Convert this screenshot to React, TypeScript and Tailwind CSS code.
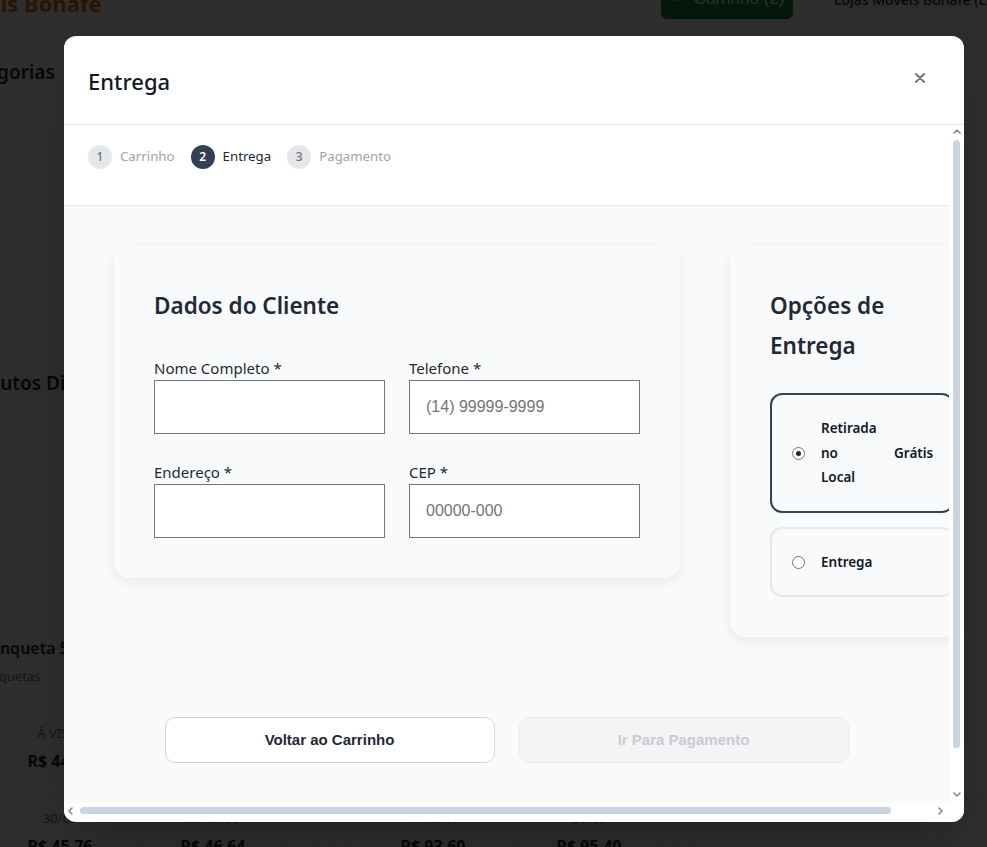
import React from "react";

function PriceCol({ w, label, price }: { w: string; label?: string; price?: string }) {
  return (
    <div className={`${w} shrink-0 border-l border-gray-200`}>
      {label && (
        <div className="flex flex-col items-center pt-[12px]">
          <div className="h-[18px] text-[13px] leading-[18px] text-gray-500">{label}</div>
          <div className="mt-[8px] h-[22px] text-[16px] font-bold leading-[22px]">{price}</div>
        </div>
      )}
    </div>
  );
}

function BackgroundPage() {
  return (
    <div className="flex h-[847px] w-[987px] flex-col overflow-hidden bg-white font-['Noto_Sans',sans-serif] text-[#1f2937]">
      <div className="-mt-[30px] flex h-[68px] shrink-0 items-center border-b border-gray-200">
        <div className="-ml-[59px] whitespace-nowrap text-[22px] font-bold text-[#d97706]">Móveis Bonafe</div>
        <div className="flex-1" />
        <div className="flex h-[49px] w-[132px] shrink-0 items-start justify-center gap-2 self-start rounded-b-md bg-[#15803d] pt-[16px] font-['Liberation_Sans',Arial,sans-serif] text-[17px] text-white">
          <span className="text-[13px] leading-[20px]">🛒</span>
          <span>Carrinho (2)</span>
        </div>
        <div className="ml-[28px] h-[50px] w-[166px] shrink-0 self-start overflow-hidden whitespace-nowrap rounded-bl-md bg-gray-100 pl-[13px] pt-[19px] text-[14px] font-medium">
          Lojas Móveis Bonafe (Loja 1)
        </div>
      </div>
      <div className="h-[758px] w-[142px] shrink-0 overflow-hidden">
        <div className="-ml-[45px] mt-[21px] h-[26px] whitespace-nowrap text-[19px] font-semibold leading-[26px]">Categorias</div>
        <div className="mt-[215px] border-t border-gray-200" />
        <div className="-ml-[43px] mt-[69px] h-[26px] whitespace-nowrap text-[19px] font-semibold leading-[26px]">Produtos Disponíveis</div>
        <div className="mt-[24px] border-t border-gray-200" />
        <div className="-ml-[20px] mt-[216px] h-[22px] whitespace-nowrap text-[16px] font-semibold leading-[22px]">Banqueta 50cm</div>
        <div className="-ml-[25px] mt-[8px] h-[18px] whitespace-nowrap text-[13px] leading-[18px] text-gray-500">Banquetas</div>
        <div className="mt-[26px] border-t border-gray-200" />
        <div className="mt-[12px] flex flex-col items-center pr-[22px]">
          <div className="h-[18px] text-[13px] leading-[18px] text-gray-500">À VISTA</div>
          <div className="mt-[8px] h-[22px] text-[16px] font-bold leading-[22px]">R$ 44,00</div>
        </div>
      </div>
      <div className="flex h-[90px] shrink-0 border-t border-gray-200">
        <div className="flex w-[142px] shrink-0 flex-col items-center pr-[22px] pt-[12px]">
          <div className="h-[18px] text-[13px] leading-[18px] text-gray-500">30/60</div>
          <div className="mt-[8px] h-[22px] text-[16px] font-bold leading-[22px]">R$ 45,76</div>
        </div>
        <PriceCol w="w-[141px]" label="30/60/90" price="R$ 46,64" />
        <PriceCol w="w-[32px]" />
        <PriceCol w="w-[19px]" />
        <PriceCol w="w-[15px]" />
        <PriceCol w="w-[167px]" label="À VISTA" price="R$ 93,60" />
        <PriceCol w="w-[145px]" label="30/60" price="R$ 95,40" />
        <PriceCol w="w-[16px]" />
        <div className="w-[15px] shrink-0 border-x border-gray-200" />
      </div>
    </div>
  );
}

function Step({ n, label, active }: { n: number; label: string; active?: boolean }) {
  return (
    <div className="flex items-center">
      <div
        className={
          active
            ? "flex h-6 w-6 items-center justify-center rounded-full bg-[#334155] text-[12px] font-semibold text-white"
            : "flex h-6 w-6 items-center justify-center rounded-full bg-[#e5e7eb] text-[12px] font-medium text-[#6b7280]"
        }
      >
        {n}
      </div>
      <span className={active ? "ml-2 text-[13.25px] text-[#1e293b]" : "ml-2 text-[13.25px] text-[#9ca3af]"}>{label}</span>
    </div>
  );
}

function Field({ label, placeholder }: { label: string; placeholder?: string }) {
  return (
    <div>
      <label className="block h-6 text-[15px] leading-6 text-[#1f2937]">{label}</label>
      <input
        placeholder={placeholder}
        className="block h-[54px] w-full border border-[#767676] bg-white px-4 font-['Liberation_Sans',Arial,sans-serif] text-[16px] text-[#111827] outline-none placeholder:text-[#757575]"
      />
    </div>
  );
}

function Radio({ checked }: { checked?: boolean }) {
  return (
    <span className="flex h-[13px] w-[13px] shrink-0 items-center justify-center rounded-full border border-[#767676] bg-white">
      {checked && <span className="h-[5px] w-[5px] rounded-full bg-[#1f2937]" />}
    </span>
  );
}

function Chevron({ dir }: { dir: "up" | "down" | "left" | "right" }) {
  const d =
    dir === "up"
      ? "M1 5L4 2L7 5"
      : dir === "down"
      ? "M1 2L4 5L7 2"
      : dir === "left"
      ? "M5 1L2 4L5 7"
      : "M2 1L5 4L2 7";
  const vertical = dir === "up" || dir === "down";
  return (
    <svg width={vertical ? 8 : 7} height={vertical ? 7 : 8} viewBox={vertical ? "0 0 8 7" : "0 0 7 8"} className="shrink-0">
      <path d={d} fill="none" stroke="#8b8b8b" strokeWidth="1.6" strokeLinecap="round" strokeLinejoin="round" />
    </svg>
  );
}

function Modal() {
  return (
    <div className="flex h-[786px] w-[900px] flex-col overflow-hidden rounded-xl bg-white pb-1 font-['Noto_Sans',sans-serif] shadow-2xl">
      <div className="flex h-[89px] shrink-0 items-center justify-between border-b border-[#e5e7eb] pl-6 pr-7">
        <h2 className="pt-[3px] text-[22px] font-medium text-[#111827]">Entrega</h2>
        <button className="-mt-[4px] flex h-8 w-8 items-center justify-center text-[#6b7280]">
          <svg width="10" height="10" viewBox="0 0 10 10">
            <path d="M1 1L9 9M9 1L1 9" stroke="currentColor" strokeWidth="1.8" strokeLinecap="round" />
          </svg>
        </button>
      </div>
      <div className="flex min-h-0 flex-1">
        <div className="min-w-0 flex-1 overflow-hidden">
          <div className="flex items-center gap-4 border-b border-[#e5e7eb] bg-white px-6 pb-[36px] pt-[20px]">
            <Step n={1} label="Carrinho" />
            <Step n={2} label="Entrega" active />
            <Step n={3} label="Pagamento" />
          </div>
          <div className="bg-[#fafafa] pb-[89px] pt-10">
            <div className="flex w-max items-start gap-[50px] pl-[50px] pr-[7px]">
              <div className="w-[566px] rounded-2xl bg-[#f8fafc] p-10 shadow-[0_4px_14px_rgba(0,0,0,0.07)]">
                <h3 className="mb-[30px] text-[22.5px] font-semibold leading-10 text-[#1f2937]">Dados do Cliente</h3>
                <div className="grid grid-cols-2 gap-x-6 gap-y-[26px]">
                  <Field label="Nome Completo *" />
                  <Field label="Telefone *" placeholder="(14) 99999-9999" />
                  <Field label="Endereço *" />
                  <Field label="CEP *" placeholder="00000-000" />
                </div>
              </div>
              <div className="w-[264px] shrink-0 rounded-2xl bg-[#f8fafc] p-10 shadow-[0_4px_14px_rgba(0,0,0,0.07)]">
                <h3 className="mb-[27px] text-[22.5px] font-semibold leading-10 text-[#1f2937]">Opções de Entrega</h3>
                <div className="flex flex-col gap-[14px]">
                  <div className="flex h-[120px] items-center rounded-xl border-2 border-[#334155] px-5">
                    <Radio checked />
                    <span className="ml-4 w-[52px] shrink-0 text-[13.5px] font-semibold leading-[24.5px] text-[#111827]">Retirada no Local</span>
                    <span className="ml-[21px] whitespace-nowrap text-[13.5px] font-semibold text-[#111827]">Grátis</span>
                  </div>
                  <div className="flex h-[70px] items-center rounded-xl border-2 border-[#e5e7eb] px-5">
                    <Radio />
                    <span className="ml-4 text-[13.5px] font-semibold leading-[24.5px] text-[#111827]">Entrega</span>
                  </div>
                </div>
              </div>
            </div>
            <div className="mt-20 flex justify-center gap-6">
              <button className="h-[46px] w-[330px] rounded-[10px] border border-[#d4d4d8] bg-white font-['Liberation_Sans',Arial,sans-serif] text-[15px] font-bold text-[#1f2937]">
                Voltar ao Carrinho
              </button>
              <button className="h-[46px] w-[330px] rounded-[10px] border border-[#ececef] bg-[#f4f4f6] font-['Liberation_Sans',Arial,sans-serif] text-[15px] font-bold text-[#c9cbd1]">
                Ir Para Pagamento
              </button>
            </div>
          </div>
        </div>
        <div className="flex w-[15px] shrink-0 flex-col items-center bg-white pb-[5px] pt-[3px]">
          <Chevron dir="up" />
          <div className="mt-[5px] h-[608px] w-[7px] rounded-full bg-[#cbd5e1]" />
          <div className="flex-1" />
          <Chevron dir="down" />
        </div>
      </div>
      <div className="flex h-[15px] shrink-0 items-center bg-white">
        <div className="flex flex-1 items-center pl-[3px] pr-[5px]">
          <Chevron dir="left" />
          <div className="ml-[6px] h-[7px] w-[811px] rounded-full bg-[#cbd5e1]" />
          <div className="flex-1" />
          <Chevron dir="right" />
        </div>
        <div className="w-[15px] shrink-0" />
      </div>
    </div>
  );
}

export default function App() {
  return (
    <div className="relative h-[847px] w-[987px] overflow-hidden">
      <BackgroundPage />
      <div className="absolute inset-0 bg-black/[0.82]" />
      <div className="absolute inset-0 pl-[64px] pt-[36px]">
        <Modal />
      </div>
    </div>
  );
}
